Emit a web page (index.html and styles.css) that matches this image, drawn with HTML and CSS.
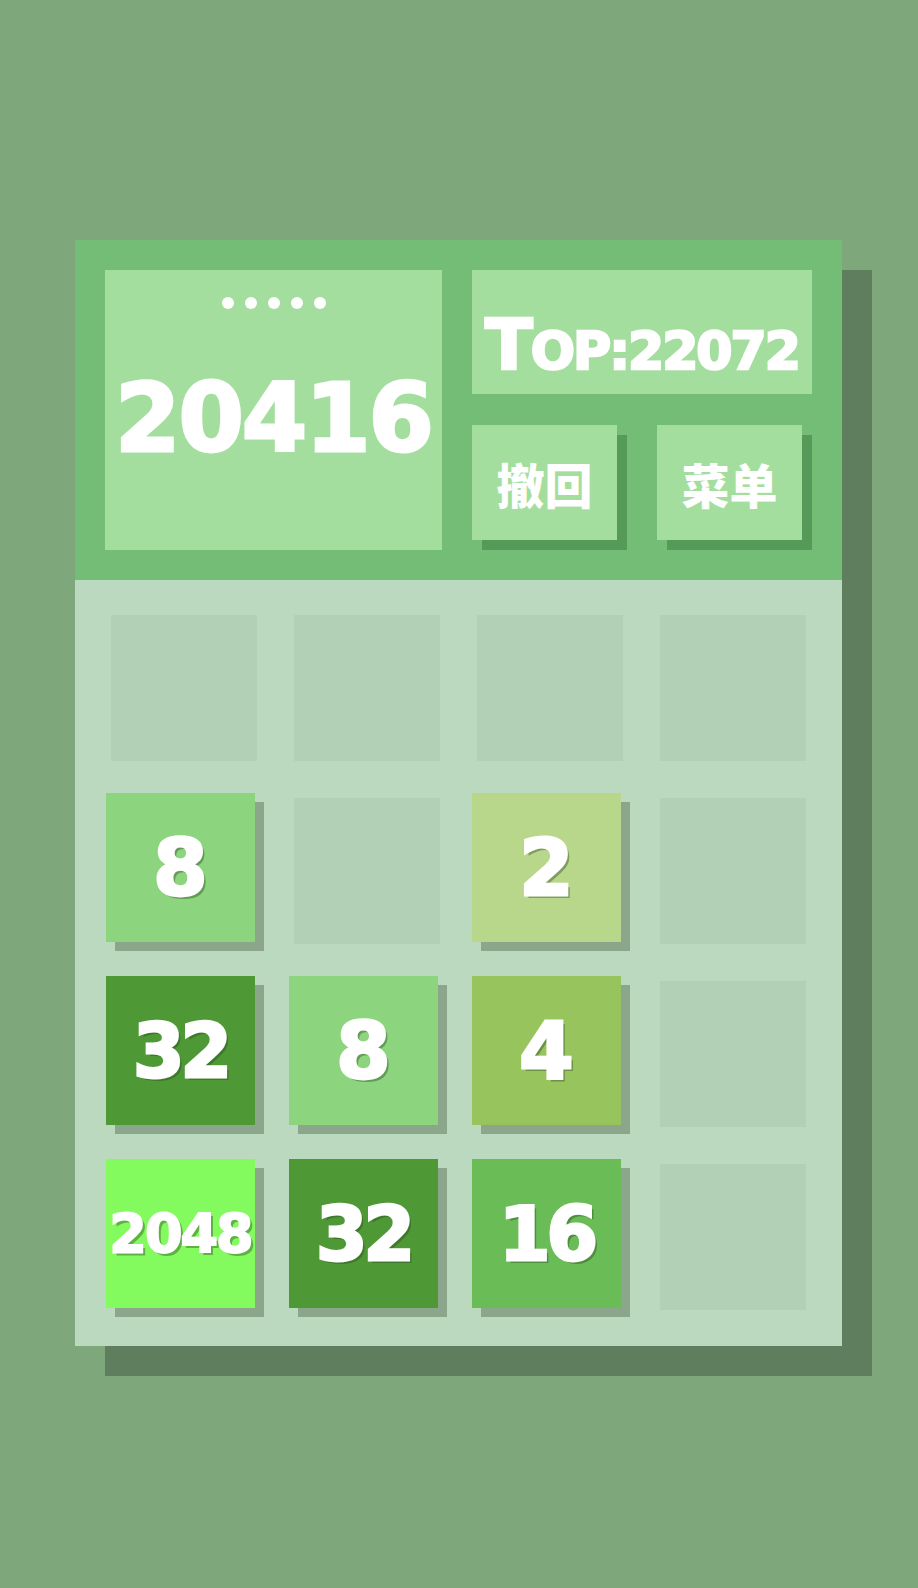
FILE: index.html
```html
<!DOCTYPE html>
<html lang="zh">
<head>
<meta charset="utf-8">
<title>2048</title>
<link rel="stylesheet" href="styles.css">
</head>
<body>
<div class="page">
  <div class="game">
    <header class="head">
      <div class="score-box">
        <div class="dots"><span></span><span></span><span></span><span></span><span></span></div>
        <div class="score">20416</div>
      </div>
      <div class="side">
        <div class="best"><span class="t">T</span>OP:22072</div>
        <div class="btns">
          <div class="btn">撤回</div>
          <div class="btn">菜单</div>
        </div>
      </div>
    </header>
    <div class="board">
      <div class="cell"><div class="empty"></div></div>
      <div class="cell"><div class="empty"></div></div>
      <div class="cell"><div class="empty"></div></div>
      <div class="cell"><div class="empty"></div></div>

      <div class="cell"><div class="tile t8">8</div></div>
      <div class="cell"><div class="empty"></div></div>
      <div class="cell"><div class="tile t2">2</div></div>
      <div class="cell"><div class="empty"></div></div>

      <div class="cell"><div class="tile t32 two">32</div></div>
      <div class="cell"><div class="tile t8">8</div></div>
      <div class="cell"><div class="tile t4">4</div></div>
      <div class="cell"><div class="empty"></div></div>

      <div class="cell"><div class="tile t2048 four">2048</div></div>
      <div class="cell"><div class="tile t32 two">32</div></div>
      <div class="cell"><div class="tile t16 two">16</div></div>
      <div class="cell"><div class="empty"></div></div>
    </div>
  </div>
</div>
</body>
</html>
```
FILE: styles.css
```css
html, body {
  margin: 0;
  background: #7ea77b;
}
body {
  height: 1588px;
  overflow: hidden;
  font-family: "DejaVu Sans", "Noto Sans CJK SC", sans-serif;
  color: #fff;
}
.page {
  padding: 240px 0 0 75px;
}
.game {
  width: 767px;
  box-shadow: 30px 30px 0 #5e7e5d;
}
.head {
  box-sizing: border-box;
  height: 340px;
  padding: 30px;
  background: #74bd77;
  display: grid;
  grid-template-columns: 337px 340px;
  column-gap: 30px;
}
.score-box {
  box-sizing: border-box;
  background: #a3de9f;
  display: flex;
  flex-direction: column;
  align-items: center;
  padding-top: 27px;
}
.dots {
  display: flex;
  gap: 11px;
}
.dots span {
  width: 12px;
  height: 12px;
  border-radius: 50%;
  background: #fff;
}
.score {
  margin-top: 63px;
  font-family: "DejaVu Sans", sans-serif;
  font-weight: bold;
  font-size: 94px;
  line-height: 1;
  letter-spacing: -2px;
  -webkit-text-stroke: 3px #fff;
}
.side {
  display: flex;
  flex-direction: column;
}
.best {
  height: 124px;
  background: #a3de9f;
  display: flex;
  align-items: baseline;
  justify-content: center;
  padding-top: 40px;
  box-sizing: border-box;
  font-family: "DejaVu Sans", sans-serif;
  font-weight: bold;
  font-size: 52px;
  line-height: 1;
  letter-spacing: -2px;
  -webkit-text-stroke: 2.5px #fff;
}
.best .t {
  font-size: 70px;
}
.btns {
  margin-top: 31px;
  display: flex;
  gap: 40px;
}
.btn {
  width: 145px;
  height: 115px;
  background: #a3de9f;
  box-shadow: 10px 10px 0 #559a59;
  display: flex;
  align-items: center;
  justify-content: center;
  font-family: "Noto Sans CJK SC", sans-serif;
  font-weight: 900;
  font-size: 48px;
  line-height: 1;
}
.board {
  box-sizing: border-box;
  height: 766px;
  padding: 30px 38px 38px 31px;
  background: #bad9bf;
  display: grid;
  grid-template-columns: repeat(4, 149px);
  grid-template-rows: repeat(4, 149px);
  gap: 34px;
}
.cell {
  width: 149px;
  height: 149px;
}
.empty {
  margin: 5px 0 0 5px;
  width: 146px;
  height: 146px;
  background: #b2d0b6;
}
.tile {
  width: 149px;
  height: 149px;
  display: flex;
  align-items: center;
  justify-content: center;
  box-shadow: 9px 9px 0 #8ba68b;
  font-family: "DejaVu Sans", sans-serif;
  font-weight: bold;
  font-size: 78px;
  line-height: 1;
  -webkit-text-stroke: 3px #fff;
  text-shadow: 3px 3px 0 rgba(40, 70, 30, 0.4);
}
.tile.two {
  font-size: 74px;
  letter-spacing: -4px;
}
.tile.four {
  font-size: 54px;
  letter-spacing: -2px;
  -webkit-text-stroke: 2px #fff;
}
.t2 { background: #b8d78b; }
.t4 { background: #98c45e; }
.t8 { background: #8cd47e; }
.t16 { background: #6abd56; }
.t32 { background: #4e9936; }
.t2048 { background: #83fa5d; }
```
